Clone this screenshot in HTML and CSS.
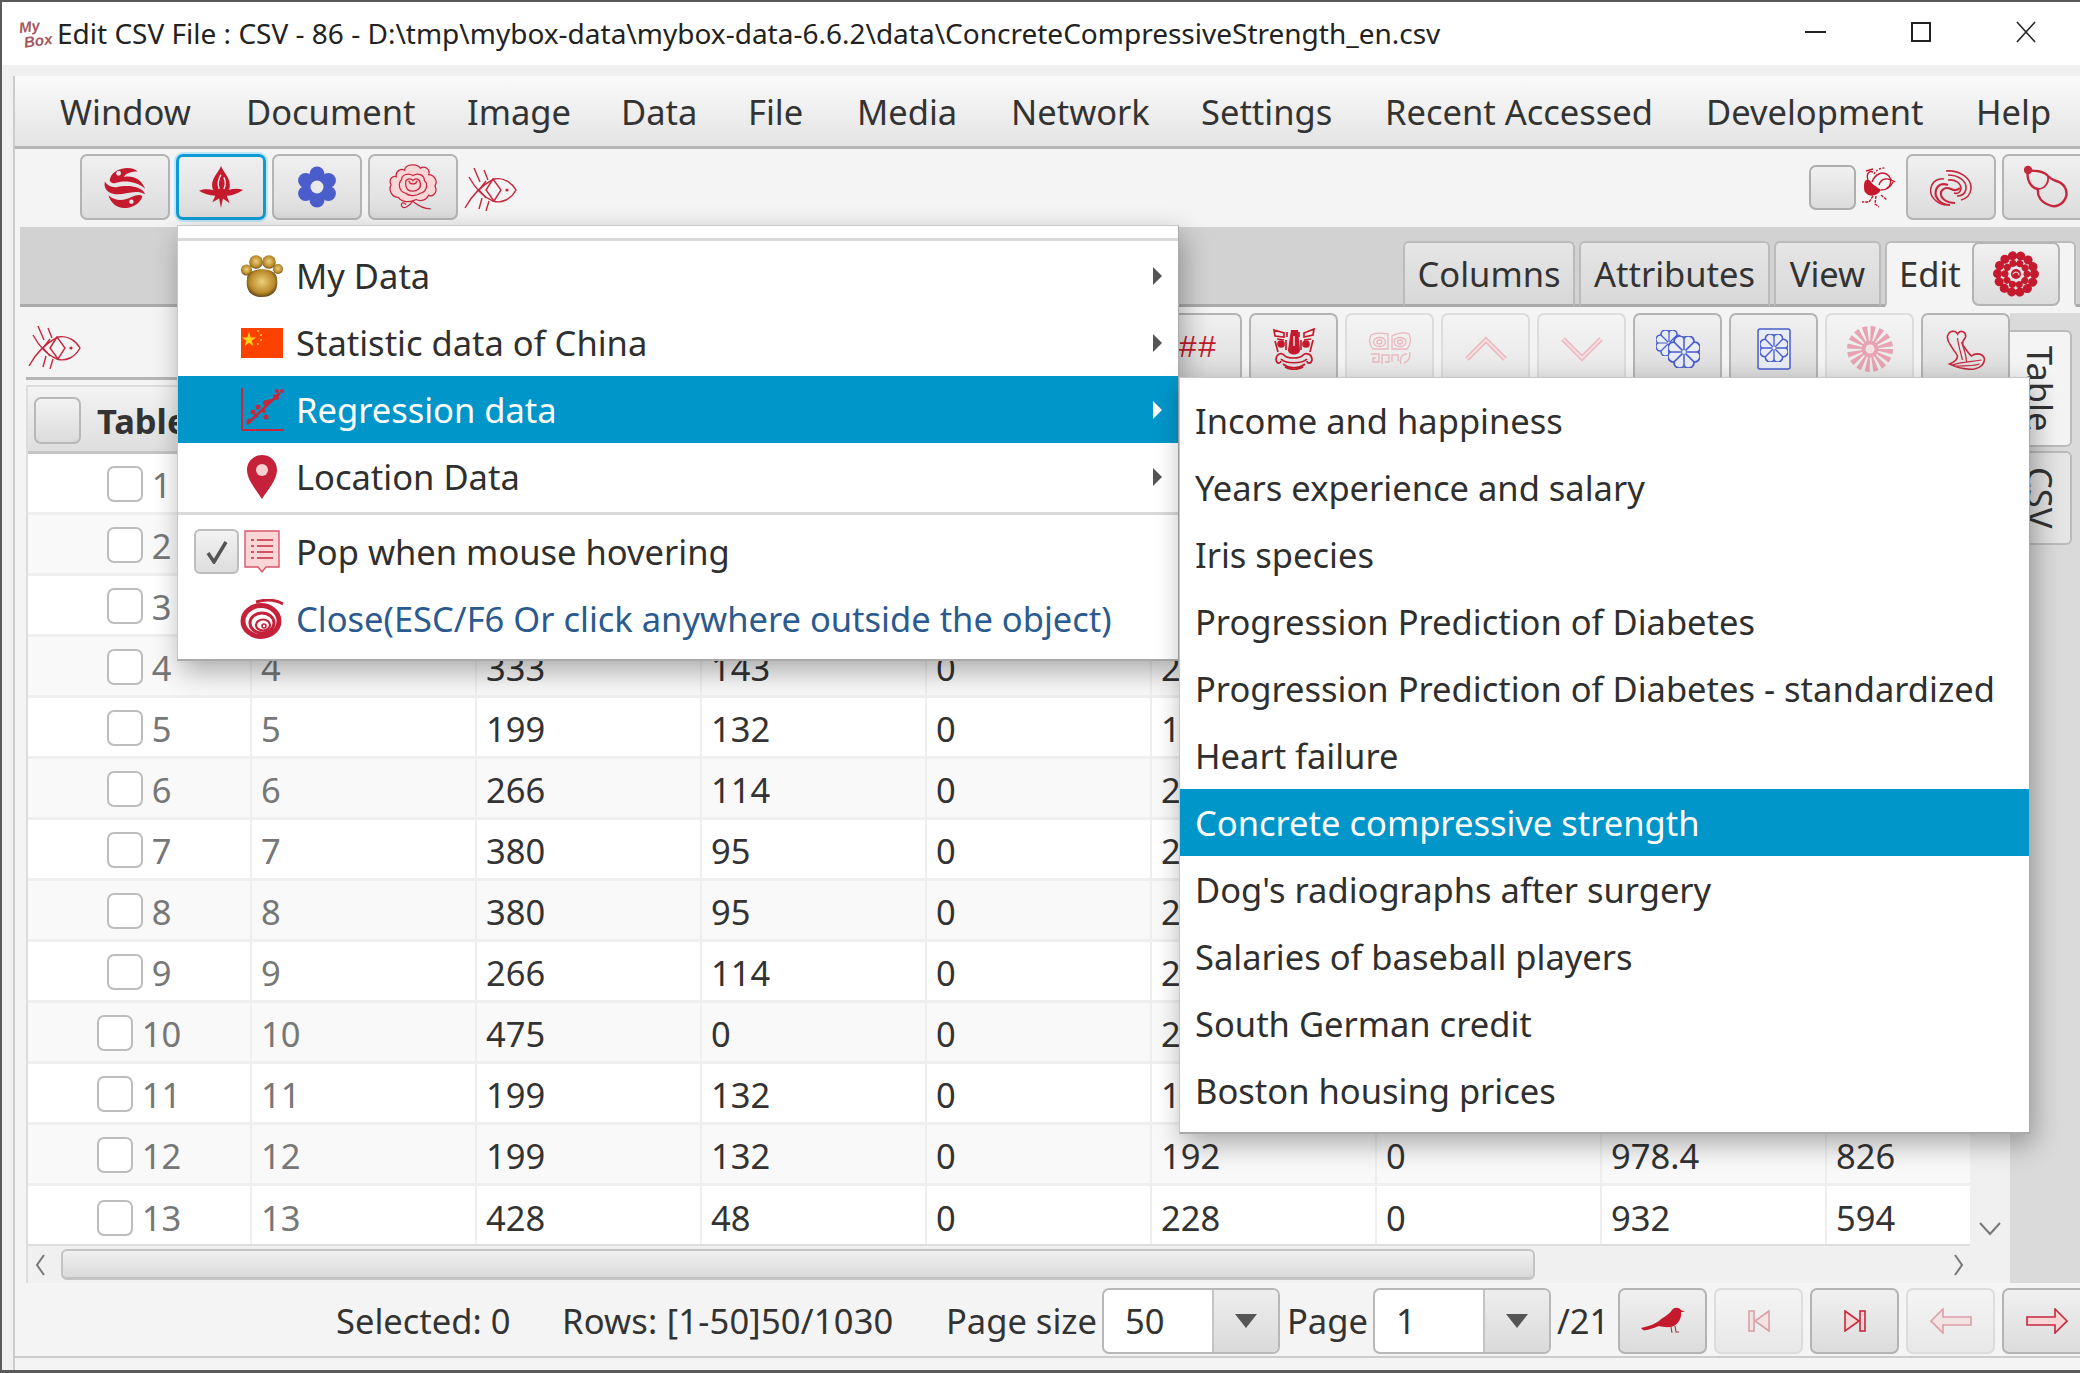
FILE: index.html
```html
<!DOCTYPE html>
<html lang="en">
<head>
<meta charset="utf-8">
<title>Edit CSV File</title>
<link rel="stylesheet" href="styles.css">
</head>
<body>
<svg class="defs" width="0" height="0">
  <defs>
    <symbol id="fish" viewBox="0 0 53 43">
      <g fill="none" stroke="#c5283d" stroke-width="1.4">
        <path d="M1 40C8 27 18 17 30 11C40 9 48 15 52 22C47 31 38 36 29 33C19 29 11 20 5 9"/>
        <path d="M29 11L22 22L30 33L37 22Z"/>
        <path d="M22 13L15 22L22 30"/>
        <path d="M10 0L16 14M20 2L24 12M15 41L18 30M22 43L25 33"/>
      </g>
      <circle cx="43" cy="22" r="1.6" fill="#c5283d"/>
    </symbol>
    <symbol id="lobed" viewBox="-16 -16 32 32">
      <path d="M14 0A5.6 5.6 0 0 1 9.900 9.900A5.6 5.6 0 0 1 0 14A5.6 5.6 0 0 1 -9.900 9.900A5.6 5.6 0 0 1 -14 0A5.6 5.6 0 0 1 -9.900 -9.900A5.6 5.6 0 0 1 0 -14A5.6 5.6 0 0 1 9.900 -9.900A5.6 5.6 0 0 1 14 0Z" fill="#e8ebf8" stroke="#4a5dcb" stroke-width="1.800"/>
      <path d="M-14 0H14M0 -14V14M-9.900 -9.900L9.900 9.900M-9.900 9.900L9.900 -9.900" stroke="#4a5dcb" stroke-width="1.500"/>
      <circle r="2" fill="#e8ebf8"/>
    </symbol>
  </defs>
</svg>

<div class="window">
  <header class="titlebar">
    <div class="logo"><span>My</span><span class="logo-box">Box</span></div>
    <div class="title">Edit CSV File : CSV - 86 - D:\tmp\mybox-data\mybox-data-6.6.2\data\ConcreteCompressiveStrength_en.csv</div>
    <div class="winctl">
      <div class="winbtn"><i class="min"></i></div>
      <div class="winbtn"><i class="max"></i></div>
      <div class="winbtn"><svg width="22" height="22" viewBox="0 0 22 22"><path d="M2 1L20 21M20 1L2 21" stroke="#222" stroke-width="1.6" fill="none"/></svg></div>
    </div>
  </header>

  <div class="app">
    <nav class="menubar">
      <span>Window</span><span>Document</span><span>Image</span><span>Data</span><span>File</span><span>Media</span><span>Network</span><span>Settings</span><span>Recent Accessed</span><span>Development</span><span>Help</span>
    </nav>

    <div class="toolbar">
      <button class="btn">
        <svg width="44" height="44" viewBox="0 0 48 48" fill="#c5192d"><path d="M8 14C12 3 30 0 38 7C31 7 24 9 23 13C32 11 42 15 46 26C37 18 23 16 13 20C9 20 6 18 8 14Z"/><path d="M2 18C0 28 8 32 16 32C25 32 36 26 46 32C42 22 25 22 16 24C10 25 5 23 2 18Z"/><path d="M6 33C13 40 24 39 31 35C37 32 41 32 43 34C40 43 31 47 23 47C15 47 8 41 6 33Z"/><circle cx="17" cy="9" r="2.6" fill="#e9e9e9"/><circle cx="31" cy="40" r="2.4" fill="#e9e9e9"/></svg>
      </button>
      <button class="btn btn-focus">
        <svg width="46" height="46" viewBox="0 0 48 48" fill="#c5192d"><path d="M24 2C21 10 13 15 15 25C17 32 31 32 33 25C35 15 27 10 24 2Z"/><path d="M1 28C9 24 18 28 24 29C30 28 39 24 47 27C41 31 35 33 30 33L33 41L26 36L24 46L22 36L15 40L18 33C12 33 6 31 1 28Z"/><path d="M24 11C21 16 20 20 22 26M27 14C29 18 29 22 27 26" stroke="#e9e9e9" stroke-width="1.4" fill="none"/></svg>
      </button>
      <button class="btn">
        <svg width="40" height="42" viewBox="0 0 40 42"><g fill="#4a5dcb"><circle cx="20" cy="8" r="7.5"/><circle cx="20" cy="34" r="7.5"/><circle cx="8.6" cy="14.5" r="7.5"/><circle cx="31.4" cy="14.5" r="7.5"/><circle cx="8.6" cy="27.5" r="7.5"/><circle cx="31.4" cy="27.5" r="7.5"/><circle cx="20" cy="21" r="11"/></g><circle cx="20" cy="21" r="6.5" fill="#e9e9e9"/></svg>
      </button>
      <button class="btn">
        <svg width="50" height="48" viewBox="0 0 48 46"><g fill="#fbd6d6" stroke="#c5283d" stroke-width="1.2"><path d="M3 21C0 15 5 12 8 13C7 7 13 5 16 7C16 1 28 0 31 5C35 2 41 6 39 11C45 11 48 18 45 22C48 27 44 33 39 31C37 36 31 37 27 35C22 38 13 38 10 33C4 33 0 26 3 21Z"/><path d="M13 16C13 11 20 9 24 12C28 9 35 11 35 17C39 20 37 28 31 29C27 32 20 32 17 29C11 28 9 20 13 16Z"/><path d="M17 20C16 15 22 14 24 17C26 14 31 15 31 20C32 24 28 27 24 27C20 27 17 25 17 20Z"/><path d="M20 17C21 21 27 21 28 17" fill="none"/></g><path d="M24 36C20 42 15 45 13 41C12 38 16 37 17 40M24 37C30 42 36 44 41 44" fill="none" stroke="#c5283d" stroke-width="1.2"/></svg>
      </button>
      <svg class="fish" width="53" height="43"><use href="#fish"/></svg>
      <div class="spacer"></div>
      <span class="check check-lg"></span>
      <svg class="phoenix" width="36" height="42" viewBox="0 0 36 42"><path d="M3 20C3 12 8 13 10 16C13 20 18 22 20 24C16 31 8 31 5 27C3 26 3 23 3 20Z" fill="#c5192d"/><g fill="none" stroke="#c5192d" stroke-width="1.4"><path d="M7 14C5 8 8 4 12 6M5 5L12 3"/><path d="M11 16C14 8 22 4 28 10C31 14 30 20 26 22"/><path d="M18 19C20 12 27 11 34 16"/><path d="M20 24C26 24 30 20 32 16"/><path d="M13 8C16 3 20 2 24 2" stroke-dasharray="2 1.500"/><path d="M12 30L8 36L1 36M15 30L14 38L18 41M20 29L26 34" stroke-dasharray="3 1"/></g></svg>
      <button class="btn">
        <svg width="42" height="40" viewBox="0 0 42 40" fill="none" stroke="#c5283d" stroke-width="1.6"><path d="M16 4C28 3 42 10 41 22C40 29 35 32 31 33"/><path d="M18 8C27 8 37 13 36 22C35 27 31 29 27 29"/><path d="M18 13C25 12 31 16 31 22C30 26 27 27 24 26"/><path d="M15 38C5 36 -1 28 1 21C2 14 9 11 14 12"/><path d="M20 38C10 38 4 30 6 23C8 17 13 16 18 18" stroke-width="2.200"/><path d="M25 36C16 36 10 31 11 25C13 21 17 20 21 22C25 24 28 23 30 21" stroke-width="2.200"/></svg>
      </button>
      <button class="btn btn-cut">
        <svg width="46" height="46" viewBox="0 0 46 46" fill="none" stroke="#c5283d" stroke-width="2.400"><path d="M4 6C10 8 18 5 24 12C27 15 28 16 32 17C40 19 44 26 42 33C39 41 31 44 25 41C17 38 13 32 14 25C7 24 2 16 4 6Z"/><path d="M14 25C20 25 25 20 24 12" stroke-width="1.800"/><circle cx="4" cy="6" r="3" fill="#c5283d"/></svg>
      </button>
    </div>

    <section class="tabpane">
      <div class="tabstrip">
        <div class="tab">Columns</div>
        <div class="tab">Attributes</div>
        <div class="tab">View</div>
        <div class="tab tab-on">Edit
          <button class="btn btn-tab">
            <svg width="46" height="46" viewBox="0 0 46 46" fill="none" stroke="#c5192d" stroke-linecap="round"><circle cx="23" cy="23" r="18.500" stroke-width="9" stroke-dasharray=".1 8.203"/><circle cx="23" cy="23" r="11" stroke-width="7" stroke-dasharray=".1 6.810"/><circle cx="23" cy="23" r="5" fill="#c5192d" stroke="none"/><path d="M20 23C22 20 26 21 26 24" stroke="#f2c9cf" stroke-width="1.200"/></svg>
          </button>
        </div>
      </div>

      <div class="editbody">
        <div class="editmain">
          <div class="toolbar2">
            <svg class="fish2" width="53" height="43"><use href="#fish"/></svg>
            <button class="tbtn"><span class="hash">##</span></button>
            <button class="tbtn">
              <svg width="42" height="42" viewBox="0 0 42 42" fill="none" stroke="#c5192d" stroke-width="1.700"><path d="M1 2L11 5V9L2 8ZM41 1L31 5V9L40 7ZM14 4V9M26 4V9"/><path d="M4 11L11 12M38 11L31 12"/><circle cx="8" cy="16" r="3" fill="#c5192d"/><circle cx="33" cy="16" r="3" fill="#c5192d"/><path d="M2 13L5 24M40 12L37 24"/><path d="M3 32C3 26 8 24 11 27C14 31 27 31 30 27C33 24 39 26 39 32C38 36 34 36 34 33M3 32C4 36 7 36 8 33"/><path d="M8 31C12 36 29 36 34 31M10 36C16 41 26 41 32 36"/><path d="M12 39C17 42 25 42 30 39"/><path d="M13 12V22M28 12V22"/><path d="M18 2H25L27 22C27 28 15 28 15 22Z" fill="#c5192d" stroke="none"/><path d="M21 8V18" stroke="#f2c9cf"/></svg>
            </button>
            <button class="tbtn off">
              <svg width="42" height="34" viewBox="0 0 42 34" fill="none" stroke="#eab6bd" stroke-width="1.300"><path d="M2 3C7 0 14 1 19 2V17H4C0 13 0 7 2 3ZM40 2C35 0 28 1 23 4V17H38C42 13 42 6 40 2Z"/><ellipse cx="10.500" cy="10" rx="6" ry="4.500"/><ellipse cx="31" cy="10" rx="6" ry="4.500"/><ellipse cx="10.500" cy="10" rx="2.500" ry="2"/><ellipse cx="31" cy="10" rx="2.500" ry="2"/><path d="M2 22H10V30H4V26H7M13 32V23H20V30H16M23 30V23H29V29M32 32C30 28 32 22 38 22M41 20C41 26 40 30 35 31"/></svg>
            </button>
            <button class="tbtn off"><svg width="44" height="26" viewBox="0 0 44 26" fill="none"><path d="M3 23L22 4L41 23" stroke="#edb7be" stroke-width="5"/><path d="M3 23L22 4L41 23" stroke="#f6dfe1" stroke-width="2"/></svg></button>
            <button class="tbtn off"><svg width="44" height="26" viewBox="0 0 44 26" fill="none"><path d="M3 3L22 22L41 3" stroke="#edb7be" stroke-width="5"/><path d="M3 3L22 22L41 3" stroke="#f6dfe1" stroke-width="2"/></svg></button>
            <button class="tbtn">
              <svg width="44" height="38" viewBox="0 0 44 38"><use href="#lobed" width="26" height="26" x="0" y="0"/><use href="#lobed" width="32" height="32" x="12" y="6"/></svg>
            </button>
            <button class="tbtn">
              <svg width="34" height="42" viewBox="0 0 34 42"><rect x="1" y="1" width="32" height="40" rx="2" fill="#e8ebf8" stroke="#4a5dcb" stroke-width="1.500"/><use href="#lobed" width="28" height="28" x="3" y="6"/></svg>
            </button>
            <button class="tbtn off">
              <svg width="46" height="46" viewBox="0 0 46 46" fill="none" stroke="#e7a3b2"><circle cx="23" cy="23" r="14" stroke-width="18" stroke-dasharray="3.200 2.300"/><circle cx="23" cy="23" r="6.500" stroke-width="4"/><circle cx="23" cy="23" r="3.500" fill="#f6dfe1" stroke="none"/></svg>
            </button>
            <button class="tbtn">
              <svg width="40" height="42" viewBox="0 0 39 42" fill="none" stroke="#c5283d" stroke-width="1.600"><path d="M7 22C4 16 0 14 1 8C3 2 9 2 11 6C14 1 20 4 19 9C18 12 14 14 17 18C20 22 22 26 25 28C30 24 37 26 38 31C38 36 34 40 28 41C20 42 12 40 3 36C8 34 11 32 11 28C10 26 9 24 7 22Z"/><path d="M11 10C12 18 14 24 16 32M15 14C18 22 20 28 20 34M6 37C14 34 24 34 35 32M10 38C18 38 28 38 33 36" stroke-width="1.200"/></svg>
            </button>
          </div>

          <div class="tablebox">
            <div class="tablearea">
              <div class="table">
                <div class="thead"><span class="check check-head"></span><b>Table index</b></div>
                <div class="row"><div class="cell first"><span class="check"></span>1</div></div>
                <div class="row"><div class="cell first"><span class="check"></span>2</div></div>
                <div class="row"><div class="cell first"><span class="check"></span>3</div></div>
                <div class="row"><div class="cell first"><span class="check"></span>4</div><div class="cell idx">4</div><div class="cell">333</div><div class="cell">143</div><div class="cell">0</div><div class="cell">228</div></div>
                <div class="row"><div class="cell first"><span class="check"></span>5</div><div class="cell idx">5</div><div class="cell">199</div><div class="cell">132</div><div class="cell">0</div><div class="cell">192</div></div>
                <div class="row"><div class="cell first"><span class="check"></span>6</div><div class="cell idx">6</div><div class="cell">266</div><div class="cell">114</div><div class="cell">0</div><div class="cell">228</div></div>
                <div class="row"><div class="cell first"><span class="check"></span>7</div><div class="cell idx">7</div><div class="cell">380</div><div class="cell">95</div><div class="cell">0</div><div class="cell">228</div></div>
                <div class="row"><div class="cell first"><span class="check"></span>8</div><div class="cell idx">8</div><div class="cell">380</div><div class="cell">95</div><div class="cell">0</div><div class="cell">228</div></div>
                <div class="row"><div class="cell first"><span class="check"></span>9</div><div class="cell idx">9</div><div class="cell">266</div><div class="cell">114</div><div class="cell">0</div><div class="cell">228</div></div>
                <div class="row"><div class="cell first"><span class="check"></span>10</div><div class="cell idx">10</div><div class="cell">475</div><div class="cell">0</div><div class="cell">0</div><div class="cell">228</div></div>
                <div class="row"><div class="cell first"><span class="check"></span>11</div><div class="cell idx">11</div><div class="cell">199</div><div class="cell">132</div><div class="cell">0</div><div class="cell">192</div></div>
                <div class="row"><div class="cell first"><span class="check"></span>12</div><div class="cell idx">12</div><div class="cell">199</div><div class="cell">132</div><div class="cell">0</div><div class="cell">192</div><div class="cell">0</div><div class="cell">978.4</div><div class="cell">826</div></div>
                <div class="row row-last"><div class="cell first"><span class="check"></span>13</div><div class="cell idx">13</div><div class="cell">428</div><div class="cell">48</div><div class="cell">0</div><div class="cell">228</div><div class="cell">0</div><div class="cell">932</div><div class="cell">594</div></div>
              </div>
              <div class="hscroll">
                <svg class="harrow" width="12" height="24" viewBox="0 0 12 24"><path d="M10 2L3 12L10 22" fill="none" stroke="#777" stroke-width="2"/></svg>
                <div class="hthumb"></div>
                <svg class="harrow" width="12" height="24" viewBox="0 0 12 24"><path d="M2 2L9 12L2 22" fill="none" stroke="#777" stroke-width="2"/></svg>
              </div>
            </div>
            <div class="vscroll">
              <svg width="22" height="14" viewBox="0 0 22 14"><path d="M1 1L11 12L21 1" fill="none" stroke="#777" stroke-width="2"/></svg>
            </div>
          </div>
        </div>
        <div class="sidetabs">
          <div class="sidetab sidetab-on">Table</div>
          <div class="sidetab">CSV</div>
        </div>
      </div>
    </section>

    <footer class="status">
      <span class="s-sel">Selected: 0</span>
      <span class="s-rows">Rows: [1-50]50/1030</span>
      <span class="s-size">Page size</span>
      <div class="combo"><span class="combo-val">50</span><span class="combo-arrow"><i></i></span></div>
      <span class="s-page">Page</span>
      <div class="combo"><span class="combo-val">1</span><span class="combo-arrow"><i></i></span></div>
      <span class="s-tot">/21</span>
      <button class="sbtn"><svg width="44" height="27" viewBox="0 0 44 27"><path d="M0 21C8 19 14 17 18 14C22 10 28 8 31 3C33 0 38 0 40 3L44 5L40 5C41 10 38 16 33 19C28 21 22 20 18 19C12 21 6 24 2 23Z" fill="#c5192d"/><path d="M30 20L31 26M34 19L35 25H38" stroke="#a03040" stroke-width="1.100" fill="none"/></svg></button>
      <button class="sbtn off"><svg width="22" height="22" viewBox="0 0 22 22" fill="#fbd6d6" stroke="#c5283d" stroke-width="1.600"><rect x="1" y="1" width="5" height="20"/><path d="M21 1L7 11L21 21Z"/></svg></button>
      <button class="sbtn"><svg width="22" height="22" viewBox="0 0 22 22" fill="#fbd6d6" stroke="#c5283d" stroke-width="1.600"><rect x="16" y="1" width="5" height="20"/><path d="M1 1L15 11L1 21Z"/></svg></button>
      <button class="sbtn off"><svg width="42" height="26" viewBox="0 0 42 26" fill="#fbd6d6" stroke="#c5283d" stroke-width="1.600"><path d="M1 13L13 1V9H41V17H13V25Z"/></svg></button>
      <button class="sbtn"><svg width="42" height="26" viewBox="0 0 42 26" fill="#fbd6d6" stroke="#c5283d" stroke-width="1.600"><path d="M41 13L29 1V9H1V17H29V25Z"/></svg></button>
    </footer>
  </div>
</div>

<div class="menu menu-main">
  <div class="msep msep-top"></div>
  <div class="mitem">
    <span class="mcheck"></span>
    <span class="micon"><svg width="42" height="42" viewBox="0 0 42 42"><defs><radialGradient id="gold" cx="50%" cy="45%" r="62%"><stop offset="0" stop-color="#ecd07a"/><stop offset=".65" stop-color="#b98a2a"/><stop offset="1" stop-color="#3d2c10"/></radialGradient></defs><g fill="url(#gold)"><circle cx="5.500" cy="15" r="5.500"/><circle cx="15" cy="7" r="6.800"/><circle cx="28" cy="7" r="6.800"/><circle cx="37" cy="14" r="5"/><path d="M6 24C5 11 37 11 36 24C38 36 31 42 21 42C11 42 4 36 6 24Z"/></g></svg></span>
    <span class="mtext">My Data</span><i class="marrow"></i>
  </div>
  <div class="mitem">
    <span class="mcheck"></span>
    <span class="micon"><svg width="42" height="30" viewBox="0 0 42 30"><rect width="42" height="30" fill="#fb4200"/><path d="M8 4L9.700 9.500H15L10.700 12.700L12.300 18L8 14.800L3.700 18L5.300 12.700L1 9.500H6.300Z" fill="#fcd21c"/><circle cx="17" cy="3" r="1" fill="#fcd21c"/><circle cx="20" cy="7" r="1" fill="#fcd21c"/><circle cx="20" cy="12" r="1" fill="#fcd21c"/><circle cx="17" cy="16" r="1" fill="#fcd21c"/></svg></span>
    <span class="mtext">Statistic data of China</span><i class="marrow"></i>
  </div>
  <div class="mitem mitem-on">
    <span class="mcheck"></span>
    <span class="micon"><svg width="44" height="44" viewBox="0 0 44 44" fill="#c5283d"><path d="M1 0V43H44V41H3V0Z"/><path d="M7 36L40 5" stroke="#c5283d" stroke-width="2.500"/><circle cx="9" cy="33" r="2.500"/><circle cx="13" cy="24" r="2.500"/><circle cx="16" cy="28" r="2"/><circle cx="18" cy="19" r="2.500"/><circle cx="24" cy="23" r="2"/><circle cx="26" cy="15" r="3"/><circle cx="30" cy="13" r="2"/><circle cx="26" cy="29" r="2.500"/><circle cx="36" cy="9" r="3"/><circle cx="42" cy="3" r="2"/><circle cx="37" cy="3" r="2"/></svg></span>
    <span class="mtext">Regression data</span><i class="marrow"></i>
  </div>
  <div class="mitem">
    <span class="mcheck"></span>
    <span class="micon"><svg width="30" height="44" viewBox="0 0 30 44"><path d="M15 0C7 0 0 6 0 15C0 25 10 36 15 44C20 36 30 25 30 15C30 6 23 0 15 0Z" fill="#c5213a"/><circle cx="15" cy="15" r="6" fill="#f9d0d0"/></svg></span>
    <span class="mtext">Location Data</span><i class="marrow"></i>
  </div>
  <div class="msep msep-mid"></div>
  <div class="mitem">
    <span class="mcheck mcheck-on"><svg width="22" height="24" viewBox="0 0 22 24"><path d="M2 13L8 22L20 2" fill="none" stroke="#555" stroke-width="3.500"/></svg></span>
    <span class="micon"><svg width="36" height="44" viewBox="0 0 36 44"><path d="M1 1H35V37H22L18 42L14 37H1Z" fill="#fbd6d6" stroke="#d9566a" stroke-width="1.400"/><path d="M13 10H29M13 16H29M13 22H29M13 28H29M7 10H10M7 16H10M7 22H10M7 28H10" stroke="#c5283d" stroke-width="1.400"/></svg></span>
    <span class="mtext">Pop when mouse hovering</span>
  </div>
  <div class="mitem mitem-close">
    <span class="mcheck"></span>
    <span class="micon"><svg width="44" height="40" viewBox="0 0 44 40" fill="none" stroke="#c5213a"><ellipse cx="21" cy="22" rx="18" ry="15.500" stroke-width="5"/><ellipse cx="22" cy="24" rx="12" ry="10" stroke-width="3"/><ellipse cx="23" cy="26" rx="7" ry="5.500" stroke-width="2.200"/><circle cx="24" cy="27" r="2" stroke-width="1.600"/><path d="M16 3C26 0 36 1 43 5" stroke-width="3"/></svg></span>
    <span class="mtext">Close(ESC/F6 Or click anywhere outside the object)</span>
  </div>
</div>

<div class="menu menu-sub">
  <div class="sitem">Income and happiness</div>
  <div class="sitem">Years experience and salary</div>
  <div class="sitem">Iris species</div>
  <div class="sitem">Progression Prediction of Diabetes</div>
  <div class="sitem">Progression Prediction of Diabetes - standardized</div>
  <div class="sitem">Heart failure</div>
  <div class="sitem sitem-on">Concrete compressive strength</div>
  <div class="sitem">Dog's radiographs after surgery</div>
  <div class="sitem">Salaries of baseball players</div>
  <div class="sitem">South German credit</div>
  <div class="sitem">Boston housing prices</div>
</div>
</body>
</html>
```
FILE: styles.css
```css
* { box-sizing: border-box; }
html, body { margin: 0; padding: 0; }
body {
  width: 2080px;
  height: 1373px;
  overflow: hidden;
  position: relative;
  background: #f0f0f0;
  font-family: "Noto Sans", "Open Sans", sans-serif;
  color: #333;
}
.defs { display: block; height: 0; width: 0; }
.window {
  height: 1373px;
  border-top: 2px solid #5a5a5a;
  border-left: 2px solid #5a5a5a;
  border-bottom: 3px solid #5a5a5a;
  display: flex;
  flex-direction: column;
  background: #f0f0f0;
}

/* title bar */
.titlebar {
  height: 63px;
  background: #fff;
  display: flex;
  align-items: center;
  flex: none;
}
.logo {
  width: 55px;
  padding-left: 18px;
  display: flex;
  flex-direction: column;
  font: italic 700 15px/15px "Liberation Sans", sans-serif;
  color: #a5585e;
  transform: rotate(-8deg);
}
.logo-box { padding-left: 3px; }
.title {
  font-size: 28px;
  color: #222;
  white-space: nowrap;
  flex: 1;
  padding-bottom: 2px;
}
.winctl { display: flex; margin: 0 1px 3px 0; }
.winbtn {
  width: 105.500px;
  height: 60px;
  display: flex;
  align-items: center;
  justify-content: center;
}
.min { display: block; width: 21px; height: 2px; background: #222; }
.max { display: block; width: 20px; height: 20px; border: 2px solid #222; }

/* app */
.app {
  margin-top: 11px;
  margin-left: 11px;
  flex: 1;
  display: flex;
  flex-direction: column;
  background: #f4f4f4;
  border-left: 2px solid #ccc;
  min-height: 0;
}
.menubar {
  height: 73px;
  flex: none;
  background: linear-gradient(#fafafa, #e4e4e4);
  border-bottom: 3px solid #b5b5b5;
  display: grid;
  grid-template-columns: 186px 221px 154px 127px 109px 154px 190px 184px 321px 270px auto;
  align-items: center;
  padding-left: 45px;
  font-size: 34.500px;
  white-space: nowrap;
}
.toolbar {
  height: 76px;
  flex: none;
  display: flex;
  align-items: center;
  padding: 0 0 0 65px;
  overflow: hidden;
  background: #f4f4f4;
}
.btn {
  width: 90px;
  height: 66px;
  padding: 0;
  margin: 0 6px 0 0;
  flex: none;
  display: flex;
  align-items: center;
  justify-content: center;
  border: 2px solid #b4b4b4;
  border-radius: 7px;
  background: linear-gradient(#f0f0f0, #dcdcdc);
}
.btn-focus {
  border: 3px solid #0e9bd4;
  box-shadow: 0 0 0 2px #bfe6f6;
}
.btn-cut { width: 90px; margin: 0 -12px 0 0; justify-content: flex-start; padding-left: 20px; }
.fish { margin-top: 5px; flex: none; }
.spacer { flex: 1; }
.check {
  display: inline-block;
  flex: none;
  width: 36px;
  height: 36px;
  border: 2px solid #bdbdbd;
  border-radius: 7px;
  background: #fff;
}
.check-lg {
  width: 47px;
  height: 45px;
  background: linear-gradient(#f0f0f0, #dcdcdc);
  border-color: #aeaeae;
}
.phoenix { margin: 0 9px 0 5px; flex: none; }

/* tabs */
.tabpane {
  margin: 2px 0 0 5px;
  height: 1056px;
  flex: none;
  display: flex;
  flex-direction: column;
}
.tabstrip {
  height: 80px;
  flex: none;
  background: #d2d2d2;
  border-bottom: 3px solid #aaa;
  display: flex;
  justify-content: flex-end;
  align-items: flex-end;
  gap: 4px;
  padding-right: 4px;
  font-size: 34.500px;
}
.tab {
  width: 172px;
  height: 66px;
  margin-bottom: -3px;
  display: flex;
  align-items: center;
  justify-content: center;
  background: linear-gradient(#e6e6e6, #d8d8d8);
  border: 2px solid #bbb;
  border-bottom: 3px solid #aaa;
  border-radius: 6px 6px 0 0;
  white-space: nowrap;
}
.tab:nth-child(2) { width: 191px; }
.tab:nth-child(3) { width: 107px; }
.tab-on {
  width: 191px;
  background: #f4f4f4;
  border-bottom-color: #f4f4f4;
  justify-content: flex-start;
  padding-left: 12px;
}
.btn-tab { margin: 0 0 0 11px; height: 64px; width: 88px; }
.editbody { flex: 1; display: flex; min-height: 0; }
.editmain { width: 1990px; display: flex; flex-direction: column; flex: none; padding-left: 6px; }
.toolbar2 {
  height: 73px;
  flex: none;
  display: flex;
  justify-content: flex-end;
  align-items: flex-end;
  gap: 7px;
  border-bottom: 3px solid #b5b5b5;
}
.fish2 { margin: 0 auto 8px 2px; flex: none; }
.tbtn {
  width: 89px;
  height: 64px;
  padding: 5px 0 0;
  flex: none;
  display: flex;
  align-items: center;
  justify-content: center;
  border: 2px solid #b4b4b4;
  border-bottom: 0;
  border-radius: 7px 7px 0 0;
  background: linear-gradient(#f0f0f0, #dcdcdc);
}
.tbtn.off { border-color: #dcdcdc; background: linear-gradient(#f4f4f4, #e8e8e8); }
.hash { font: 32px "Liberation Mono", monospace; color: #c5192d; }

.tablebox {
  flex: 1;
  display: flex;
  min-height: 0;
  margin-top: 5px;
}
.tablearea {
  width: 1944px;
  flex: none;
  display: flex;
  flex-direction: column;
  border-top: 2px solid #ddd;
  border-left: 2px solid #ddd;
}
.table { flex: 1; overflow: hidden; background: #fff; min-height: 0; }
.thead {
  height: 67px;
  display: flex;
  align-items: center;
  padding: 2px 0 0 6px;
  background: linear-gradient(#f3f3f3, #dedede);
  border-bottom: 3px solid #c4c4c4;
  font-size: 34.500px;
}
.thead b { margin-left: 16px; font-weight: 700; color: #333; }
.check-head {
  width: 47px;
  height: 47px;
  background: linear-gradient(#f2f2f2, #dcdcdc);
  border-color: #b8b8b8;
}
.row {
  height: 61px;
  display: flex;
  width: 2100px;
  background: #fff;
  border-bottom: 3px solid #efefef;
  font-size: 34.500px;
}
.row:nth-child(odd) { background: #f9f9f9; }
.cell {
  width: 225px;
  flex: none;
  padding: 2px 0 0 9px;
  display: flex;
  align-items: center;
  border-right: 2px solid #eee;
}
.first {
  width: 224px;
  padding-left: 0;
  justify-content: center;
  gap: 9px;
  color: #777;
}
.idx { color: #777; }
.row-last { border-bottom: 0; }
.hscroll {
  height: 39px;
  flex: none;
  display: flex;
  align-items: center;
  background: #f0f0f0;
  border-top: 2px solid #ddd;
  padding: 0 6px;
}
.hthumb {
  width: 1474px;
  height: 31px;
  margin: 0 418px 0 15px;
  border: 2px solid #c4c4c4;
  border-bottom-width: 3px;
  border-radius: 6px;
  background: linear-gradient(#f0f0f0, #dadada);
  flex: none;
}
.harrow { flex: none; }
.vscroll {
  flex: 1;
  background: #f0f0f0;
  display: flex;
  align-items: flex-end;
  justify-content: center;
  padding-bottom: 47px;
}

/* side tabs */
.sidetabs {
  flex: 1;
  background: #dadada;
  margin-top: 6px;
  padding-top: 17px;
  display: flex;
  flex-direction: column;
  align-items: flex-start;
  gap: 4px;
}
.sidetab {
  width: 62px;
  writing-mode: vertical-rl;
  font-size: 34.500px;
  border: 2px solid #bbb;
  border-left: 0;
  border-radius: 0 6px 6px 0;
  background: linear-gradient(90deg, #dcdcdc, #e6e6e6);
  padding: 14px 0;
  display: flex;
  align-items: center;
}
.sidetab-on { background: #f4f4f4; }

/* status */
.status {
  height: 75px;
  flex: none;
  display: flex;
  align-items: center;
  border-bottom: 2px solid #ccc;
  padding: 2px 0 0 321px;
  font-size: 34.500px;
  white-space: nowrap;
  overflow: hidden;
}
.s-sel { width: 226px; flex: none; }
.s-rows { width: 384px; flex: none; letter-spacing: .2px; }
.s-size { width: 156px; flex: none; }
.s-page { width: 93px; flex: none; padding-left: 7px; }
.s-tot { width: 67px; flex: none; padding-left: 6px; }
.combo {
  width: 178px;
  height: 66px;
  flex: none;
  display: flex;
  border: 2px solid #b8b8b8;
  border-radius: 7px;
  overflow: hidden;
  background: #fff;
}
.combo-val { flex: 1; padding-left: 21px; display: flex; align-items: center; }
.combo-arrow {
  width: 66px;
  flex: none;
  display: flex;
  align-items: center;
  justify-content: center;
  background: linear-gradient(#eee, #dadada);
  border-left: 2px solid #c4c4c4;
}
.combo-arrow i {
  width: 0;
  height: 0;
  border-left: 11px solid transparent;
  border-right: 11px solid transparent;
  border-top: 14px solid #555;
}
.sbtn {
  width: 89px;
  height: 66px;
  flex: none;
  padding: 0;
  margin-right: 7px;
  display: flex;
  align-items: center;
  justify-content: center;
  border: 2px solid #b4b4b4;
  border-radius: 7px;
  background: linear-gradient(#f0f0f0, #dcdcdc);
}
.sbtn.off { border-color: #dcdcdc; background: linear-gradient(#f4f4f4, #e8e8e8); }
.sbtn.off svg { opacity: .4; }

/* popup menus */
.menu {
  position: absolute;
  background: #fff;
  border: 1px solid #c8c8c8;
  border-right-color: #aaa;
  border-bottom: 2px solid #aaa;
  box-shadow: 4px 10px 26px rgba(0, 0, 0, .32);
  font-size: 34.500px;
  white-space: nowrap;
}
.menu-main {
  left: 177px;
  top: 225px;
  width: 1002px;
  height: 436px;
  padding-top: 12px;
}
.msep { height: 3px; background: #d9d9d9; }
.msep-top { margin-bottom: 1px; }
.msep-mid { margin: 2px 0 3px; }
.mitem {
  height: 67px;
  display: flex;
  align-items: center;
  padding: 0 16px;
  color: #2f2f2f;
}
.mitem-on { background: #0096c9; color: #fff; }
.mitem-close { color: #2a5a8e; }
.mcheck {
  width: 45px;
  height: 45px;
  flex: none;
  display: flex;
  align-items: center;
  justify-content: center;
}
.mcheck-on {
  border: 2px solid #bdbdbd;
  border-radius: 6px;
  background: linear-gradient(#f2f2f2, #dedede);
}
.micon {
  width: 45px;
  flex: none;
  display: flex;
  align-items: center;
  justify-content: center;
  margin-right: 12px;
}
.mtext { flex: 1; }
.marrow {
  width: 0;
  height: 0;
  border-top: 9px solid transparent;
  border-bottom: 9px solid transparent;
  border-left: 9px solid #555;
}
.mitem-on .marrow { border-left-color: #fff; }
.menu-sub {
  left: 1179px;
  top: 377px;
  width: 851px;
  height: 757px;
  padding-top: 9px;
}
.sitem {
  height: 67px;
  display: flex;
  align-items: center;
  padding-left: 15px;
  color: #2f2f2f;
}
.sitem-on { background: #0096c9; color: #fff; }
```
